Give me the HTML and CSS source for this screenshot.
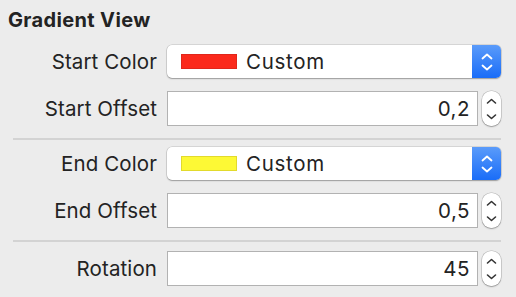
FILE: index.html
```html
<!DOCTYPE html>
<html>
<head>
<meta charset="utf-8">
<link rel="stylesheet" href="styles.css">
</head>
<body>
<div class="inspector">
  <h1 class="title">Gradient View</h1>

  <div class="group">
    <div class="label">Start Color</div>
    <div class="popup">
      <span class="swatch swatch-red"></span>
      <span class="popup-text">Custom</span>
      <span class="popup-arrows">
        <svg width="12" height="18" viewBox="0 0 12 18"><path d="M1.5 5.5 L6 1.5 L10.5 5.5 M1.5 12.5 L6 16.5 L10.5 12.5" fill="none" stroke="#fff" stroke-width="1.8" stroke-linecap="round" stroke-linejoin="round"/></svg>
      </span>
    </div>

    <div class="label">Start Offset</div>
    <div class="numrow">
      <div class="field">0,2</div>
      <div class="stepper">
        <svg width="11" height="22" viewBox="0 0 11 22"><path d="M1.5 5 L5.5 1.5 L9.5 5 M1.5 17 L5.5 20.5 L9.5 17" fill="none" stroke="#333" stroke-width="1.6" stroke-linecap="round" stroke-linejoin="round"/></svg>
      </div>
    </div>
  </div>

  <div class="sep"></div>

  <div class="group">
    <div class="label">End Color</div>
    <div class="popup">
      <span class="swatch swatch-yellow"></span>
      <span class="popup-text">Custom</span>
      <span class="popup-arrows">
        <svg width="12" height="18" viewBox="0 0 12 18"><path d="M1.5 5.5 L6 1.5 L10.5 5.5 M1.5 12.5 L6 16.5 L10.5 12.5" fill="none" stroke="#fff" stroke-width="1.8" stroke-linecap="round" stroke-linejoin="round"/></svg>
      </span>
    </div>

    <div class="label">End Offset</div>
    <div class="numrow">
      <div class="field">0,5</div>
      <div class="stepper">
        <svg width="11" height="22" viewBox="0 0 11 22"><path d="M1.5 5 L5.5 1.5 L9.5 5 M1.5 17 L5.5 20.5 L9.5 17" fill="none" stroke="#333" stroke-width="1.6" stroke-linecap="round" stroke-linejoin="round"/></svg>
      </div>
    </div>
  </div>

  <div class="sep sep-2"></div>

  <div class="group">
    <div class="label">Rotation</div>
    <div class="numrow">
      <div class="field">45</div>
      <div class="stepper">
        <svg width="11" height="22" viewBox="0 0 11 22"><path d="M1.5 5 L5.5 1.5 L9.5 5 M1.5 17 L5.5 20.5 L9.5 17" fill="none" stroke="#333" stroke-width="1.6" stroke-linecap="round" stroke-linejoin="round"/></svg>
      </div>
    </div>
  </div>
</div>
</body>
</html>
```

FILE: styles.css
```css
html, body {
  margin: 0;
  padding: 0;
  background: #ececec;
}

body {
  font-family: Inter, "Liberation Sans", sans-serif;
  color: #232323;
  width: 516px;
  height: 297px;
  overflow: hidden;
}

.inspector {
  padding: 8px 15px 0 8px;
}

.title {
  margin: 0 0 13px 0;
  font-size: 20px;
  line-height: 24px;
  font-weight: 700;
  color: #232323;
  letter-spacing: 0.35px;
}

.group {
  display: grid;
  grid-template-columns: 149px 1fr;
  column-gap: 10px;
  row-gap: 13px;
  align-items: center;
}

.label {
  text-align: right;
  font-size: 20.5px;
  line-height: 24px;
  letter-spacing: 0.1px;
  padding-top: 1px;
  color: #232323;
}

.popup {
  height: 33px;
  display: flex;
  align-items: center;
  background: #fff;
  border-radius: 5px;
  box-shadow: 0 0 0 0.5px rgba(0, 0, 0, 0.18), 0 1px 1.5px rgba(0, 0, 0, 0.28);
  padding-left: 14px;
}

.swatch {
  width: 56px;
  height: 15px;
  box-sizing: border-box;
  border: 1px solid;
  flex: none;
}

.swatch-red {
  background: #fb2a1c;
  border-color: #e0271b;
}

.swatch-yellow {
  background: #fdf935;
  border-color: #e2da2c;
}

.popup-text {
  margin-left: 9px;
  font-size: 20.5px;
  line-height: 24px;
  letter-spacing: 0.7px;
  flex: 1;
  padding-top: 1px;
}

.popup-arrows {
  width: 29px;
  align-self: stretch;
  display: flex;
  align-items: center;
  justify-content: center;
  background: linear-gradient(#5a9bfa, #1a6df8);
  border-radius: 0 5px 5px 0;
}

.numrow {
  display: flex;
  align-items: center;
  gap: 4px;
}

.field {
  flex: 1;
  height: 35px;
  box-sizing: border-box;
  border: 1px solid #b2b2b2;
  background: #fff;
  text-align: right;
  padding: 0 7px;
  font-size: 20.5px;
  line-height: 34px;
  letter-spacing: 0.5px;
  color: #232323;
}

.stepper {
  width: 19px;
  height: 35px;
  box-sizing: border-box;
  background: #fff;
  border-radius: 9px;
  box-shadow: 0 0 0 0.5px rgba(0, 0, 0, 0.22), 0 1px 1.5px rgba(0, 0, 0, 0.25);
  display: flex;
  align-items: center;
  justify-content: center;
  flex: none;
}

.sep {
  height: 2px;
  background: #d3d3d3;
  margin: 12px 0 7px 5px;
}

.sep-2 {
  margin-bottom: 9px;
}
```
